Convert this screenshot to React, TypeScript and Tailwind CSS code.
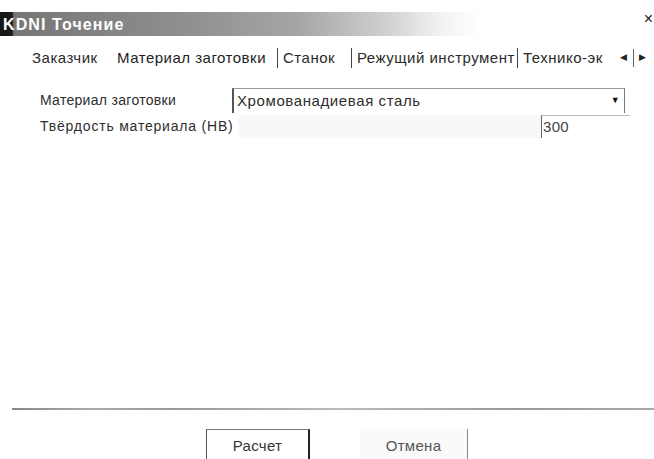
import { useState } from 'react'

// text width of each tab caption, so the separators line up with the strip
const TABS = [
  { label: 'Заказчик', w: 'w-[85px]' },
  { label: 'Материал заготовки', w: 'w-[160px]' },
  { label: 'Станок', w: 'w-[68px]' },
  { label: 'Режущий инструмент', w: 'w-[160px]' },
  { label: 'Технико-эк', w: 'w-[94px]' },
]

function TitleBar() {
  return (
    <div className="mt-[12px] h-[24px] flex items-center justify-between bg-[linear-gradient(90deg,#161616_0px,#1c1c1c_12px,#767676_14px,#8e8e8e_180px,#a6a6a6_300px,#d2d2d2_390px,#f2f2f2_440px,#ffffff_480px)]">
      <span className="pl-[3px] pt-[1px] text-[16px] font-bold text-white tracking-[1.1px]">KDNI Точение</span>
      <span className="-mt-[10px] pr-[1px] text-[16px] leading-none text-[#222]">×</span>
    </div>
  )
}

function Tabs() {
  const [active, setActive] = useState(1)
  return (
    <div className="mt-[10px] h-[24px] flex items-center pl-[32px] text-[15px] tracking-[0.5px] text-[#2a2a2a] whitespace-nowrap">
      {TABS.map((t, i) => (
        <div key={t.label} className="flex items-center">
          {i > 1 && <span className="w-px h-[20px] bg-[#444] mr-[5px]" />}
          <button
            type="button"
            onClick={() => setActive(i)}
            className={`${t.w} text-left ${i === active ? 'text-[#222]' : ''}`}
          >
            {t.label}
          </button>
        </div>
      ))}
      {/* scroll arrows for the tab strip */}
      <div className="ml-[3px] flex items-center gap-[5px] text-[9px] text-[#222]">
        <span>◀</span>
        <span className="w-px h-[18px] bg-[#666]" />
        <span>▶</span>
      </div>
    </div>
  )
}

function FormRows() {
  return (
    <div className="mt-[18px] flex flex-col gap-[2px] text-[14px] tracking-[0.3px] text-[#2e2e2e] whitespace-nowrap">
      <div className="flex items-center h-[25px]">
        <span className="w-[232px] pl-[40px] shrink-0">Материал заготовки</span>
        <div className="w-[393px] h-[25px] flex items-center border-t border-t-[#9a9a9a] border-l-2 border-l-[#555] border-r border-r-[#777]">
          <span className="pl-[3px] flex-1 text-[15px] tracking-[0.6px]">Хромованадиевая сталь</span>
          <span className="pr-[4px] text-[9px] text-[#111]">▼</span>
        </div>
      </div>
      <div className="flex items-center h-[23px]">
        <span className="w-[238px] pl-[40px] shrink-0 tracking-[0.8px]">Твёрдость материала (НВ)</span>
        <div className="w-[392px] h-[23px] flex justify-end bg-[#f8f8f8]">
          <div className="w-[89px] h-[23px] flex items-center border-t border-t-[#bbb] border-l border-l-[#666] bg-white">
            <span className="pl-[1px] text-[15px] text-[#444]">300</span>
          </div>
        </div>
      </div>
    </div>
  )
}

export default function App() {
  return (
    <div className="w-[654px] h-[459px] bg-white overflow-hidden flex flex-col font-['Liberation_Sans',Arial,sans-serif]">
      <TitleBar />
      <Tabs />
      <FormRows />
      <div className="flex-1" />
      {/* separator above the buttons */}
      <div className="ml-[12px] h-[2px] bg-[linear-gradient(90deg,#888_0px,#aaa_80px,#999_160px,#bbb_330px,#999_500px,#aaa_654px)]" />
      <div className="mt-[19px] h-[30px] flex text-[15px] tracking-[0.3px] text-[#333]">
        <button
          type="button"
          className="ml-[206px] w-[104px] h-[32px] border-t border-t-[#777] border-l border-l-[#555] border-r-2 border-r-[#222] pt-[2px]"
        >
          Расчет
        </button>
        <button
          type="button"
          className="ml-[50px] w-[108px] h-[32px] bg-[#fafafa] border-r border-r-[#888] pt-[2px] text-[#555]"
        >
          Отмена
        </button>
      </div>
    </div>
  )
}
